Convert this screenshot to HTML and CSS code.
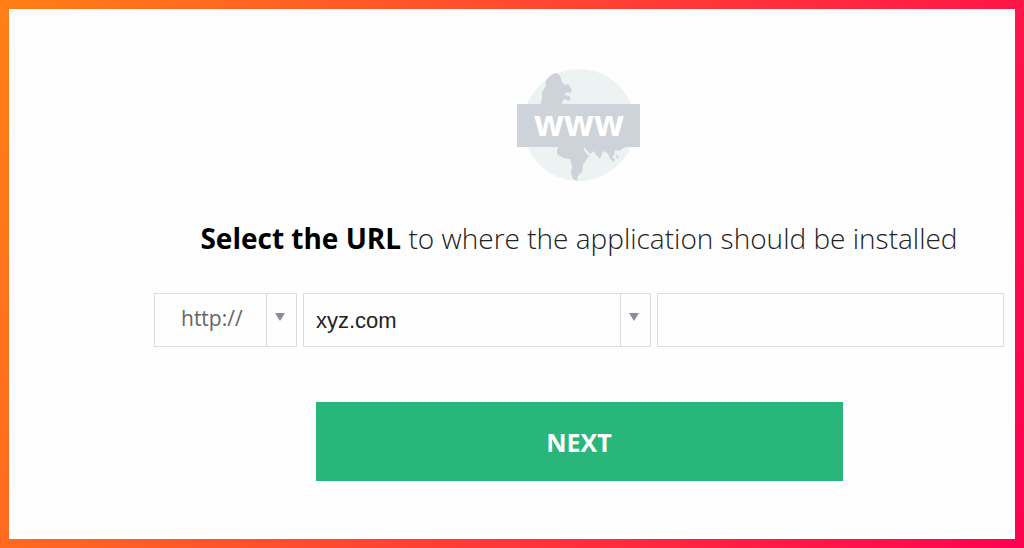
FILE: index.html
```html
<!DOCTYPE html>
<html lang="en">
    <head>
        <meta charset="utf-8">
        <title>Select the URL</title>
        <link rel="stylesheet" href="styles.css">
    </head>
    <body>
        <main class="panel">
            <svg class="globe" viewBox="0 0 124 114" aria-hidden="true">
                <circle cx="62" cy="57" r="56" fill="#edf2f3"/>
                <path fill="#ced3da" d="M22 40 L25 31 L25 24 L29 18 L29 12 L33 8 L36 6 L40 5 L43 8 L45 14 L48 17 L51 16 L54 20 L55 23 L53 25 L50 24 L47 27 L52 28 L54 31 L51 33 L49 31 L46 32 L45 35 L50 40 Z"/>
                <path fill="#ced3da" d="M42 78 L66 78 L68 84 L72 88 L69 92 L66 97 L65 104 L61 108 L60 113 L56 111 L54 105 L55 98 L53 91 L46 90 L40 86 L40 82 Z"/>
                <path fill="#ced3da" d="M67 79 L108 79 L102 83 L98 82 L97 87 L94 90 L90 85 L86 83 L83 91 L79 87 L77 83 L73 86 Z"/>
                <path fill="#ced3da" d="M94 87 L98 92 L96 94 L92 89 Z M99 86 L102 89 L100 91 Z"/>
                <rect x="0" y="36" width="123" height="43" fill="#ced3da"/>
                <text x="62" y="68" class="globe-text">www</text>
            </svg>
            <h1><b>Select the URL</b> to where the application should be installed</h1>
            <form>
                <div class="fields">
                    <div class="select protocol">
                        <select aria-label="Protocol">
                            <option>http://</option>
                            <option>https://</option>
                        </select>
                    </div>
                    <div class="select domain">
                        <select aria-label="Domain">
                            <option>xyz.com</option>
                        </select>
                    </div>
                    <input type="text" class="path" aria-label="Path">
                </div>
                <button type="submit" class="next">NEXT</button>
            </form>
        </main>
    </body>
</html>
```
FILE: styles.css
```css
*{
    box-sizing:border-box;
}
body{
    margin:0;
    min-height:100vh;
    padding:9px;
    display:flex;
    background:linear-gradient(110deg, #ff7f15, #ff0052);
    font-family:"Open Sans", sans-serif;
}
.panel{
    flex:1;
    padding:59px 11px 58px 145px;
    background:#fefefe;
    text-align:center;
}
.globe{
    display:block;
    width:124px;
    height:114px;
    margin:0 auto;
}
.globe-text{
    fill:#fff;
    font-family:"Open Sans", sans-serif;
    font-size:35px;
    font-weight:700;
    text-anchor:middle;
}
h1{
    margin:36px 0 35px;
    font-size:28px;
    line-height:40px;
    font-weight:300;
    color:#222;
}
h1 b{
    font-weight:700;
    color:#000;
}
.fields{
    display:grid;
    grid-template-columns:143px 1fr 1fr;
    gap:6px;
}
.select{
    position:relative;
}
.select select,
.path{
    display:block;
    width:100%;
    height:54px;
    border:1px solid #dcdcdf;
    border-radius:0;
    background:#fefefe;
}
.select select{
    appearance:none;
    padding:0 31px 0 12px;
}
.protocol select{
    padding:0 31px 4px 26px;
    font-family:"Open Sans", sans-serif;
    font-size:21px;
    color:#666;
}
.domain select{
    font-family:"Liberation Sans", sans-serif;
    font-size:22px;
    color:#222;
}
/* divider and arrow on the right of each drop-down */
.select::before{
    content:"";
    position:absolute;
    top:0;
    bottom:0;
    right:30px;
    width:1px;
    background:#dcdcdf;
}
.select::after{
    content:"";
    position:absolute;
    top:20px;
    right:12px;
    border:5px solid transparent;
    border-top:8px solid #8b8b9b;
    border-bottom:0;
}
.path{
    padding:0 12px;
    font-size:20px;
}
.next{
    display:block;
    width:62%;
    height:79px;
    margin:55px auto 0;
    border:0;
    background:#29b67a;
    color:#fff;
    font-family:"Open Sans", sans-serif;
    font-size:25px;
    font-weight:700;
}
```
